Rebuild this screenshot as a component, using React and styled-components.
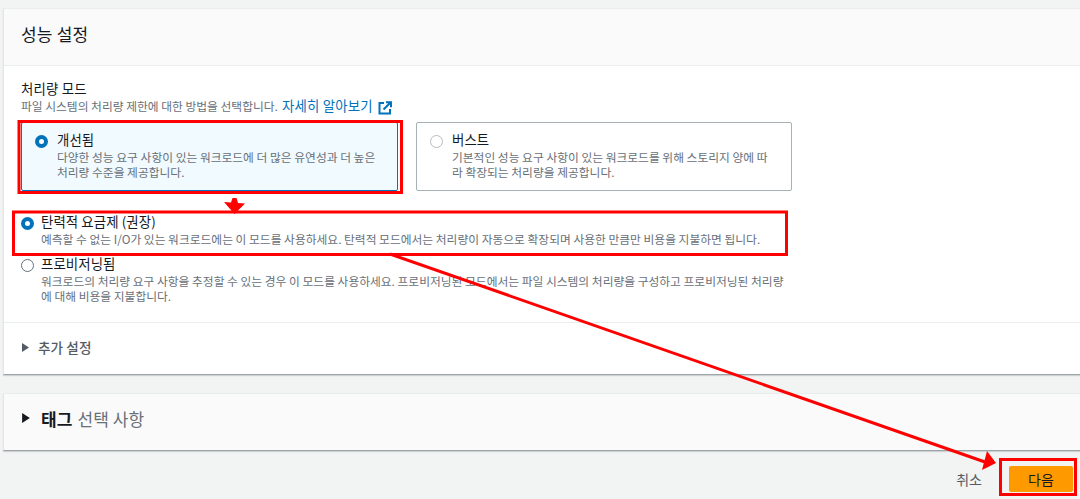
import React from "react";
import styled, { createGlobalStyle } from "styled-components";

const GlobalStyle = createGlobalStyle`
    html, body {
        margin: 0;
        padding: 0;
        background: #f2f3f3;
        font-family: "Noto Sans CJK KR", "Noto Sans", sans-serif;
        color: #16191f;
    }
    * { box-sizing: border-box; }
`;

const Page = styled.div`
    position: relative;
    width: 1080px;
    height: 499px;
    overflow: hidden;
    padding: 8px 0 0 3px;
`;

const Card = styled.section`
    background: ${(props) => (props.$muted ? "#fafafa" : "#fff")};
    border-left: 1px solid #e4e7e7;
    border-top: 1px solid #eaeded;
    border-bottom: 1px solid #9ba5a8;
    box-shadow: 0 1px 1px rgba(0, 28, 36, 0.15);
`;

const CardHeader = styled.header`
    height: 57px;
    padding: 0 0 6px 17px;
    display: flex;
    align-items: center;
    background: #fafafa;
    border-bottom: 1px solid #eaeded;
    font-size: 17px;
    letter-spacing: 0.2px;
    line-height: 20px;
`;

const CardBody = styled.div`
    padding: 13px 0 0 17px;
    height: 308px;
`;

const FieldLabel = styled.div`
    font-size: 13.4px;
    line-height: 18px;
    letter-spacing: 0.2px;
`;

const FieldHint = styled.div`
    display: flex;
    align-items: center;
    height: 17px;
    font-size: 11.75px;
    line-height: 17px;
    color: #687078;
`;

const LearnMore = styled.a`
    color: #0073bb;
    font-size: 13.4px;
    margin-left: 4px;
    letter-spacing: 0.2px;
`;

const ExternalIcon = styled.svg`
    margin: 4px 0 0 5px;
    width: 14px;
    height: 14px;
`;

const Tiles = styled.div`
    display: grid;
    grid-template-columns: 377px 376px;
    gap: 18px;
    margin-top: 8px;
`;

const Tile = styled.div`
    height: 69px;
    display: flex;
    gap: 9px;
    padding: 7px 19px 7px 13px;
    border: 1px solid ${(props) => (props.$selected ? "#0073bb" : "#a6b2b5")};
    border-radius: 2px;
    background: ${(props) => (props.$selected ? "#f1faff" : "#fff")};
`;

const Radio = styled.span`
    flex: none;
    width: 13px;
    height: 13px;
    margin-top: 5px;
    border-radius: 50%;
    background: #fff;
    border: ${(props) =>
        props.$checked
            ? "4px solid #0073bb"
            : `1px solid ${props.$faint ? "#b5bcbf" : "#687078"}`};
`;

const OptionTitle = styled.div`
    font-size: 13.4px;
    line-height: 19px;
    letter-spacing: 0.1px;
`;

const OptionText = styled.div`
    font-size: 11.75px;
    line-height: 15px;
    color: #687078;
`;

const Options = styled.div`
    display: flex;
    flex-direction: column;
    gap: 8px;
    margin-top: 21px;
`;

const Option = styled.div`
    display: flex;
    gap: 7px;
    width: 770px;
`;

const Divider = styled.hr`
    border: 0;
    border-top: 1px solid #eaeded;
    margin: 19px 0 0 -17px;
`;

const Expander = styled.div`
    display: flex;
    align-items: center;
    gap: ${(props) => (props.$large ? "11px" : "9px")};
    height: 48px;
    margin-left: ${(props) => (props.$large ? "0" : "1px")};
    font-size: ${(props) => (props.$large ? "17px" : "13.6px")};
    color: ${(props) => (props.$large ? "#16191f" : "#545b64")};
    font-weight: ${(props) => (props.$large ? 400 : 500)};
    letter-spacing: 0.1px;
`;

const Caret = styled.svg`
    flex: none;
    width: ${(props) => (props.$large ? "8px" : "7px")};
    height: ${(props) => (props.$large ? "10px" : "9px")};
    fill: ${(props) => (props.$large ? "#16191f" : "#545b64")};
`;

const TagCard = styled(Card)`
    margin-top: 18px;
    height: 58px;
    padding-left: 18px;
`;

const Strong = styled.strong`
    font-weight: 700;
`;

const Optional = styled.span`
    color: #687078;
    margin-left: 5px;
`;

const Footer = styled.footer`
    display: flex;
    justify-content: flex-end;
    align-items: center;
    gap: 27px;
    margin-top: 15px;
    padding-right: 7px;
`;

const LinkButton = styled.span`
    font-size: 14px;
    color: #545b64;
`;

const PrimaryButton = styled.span`
    width: 64px;
    height: 26px;
    display: flex;
    align-items: center;
    justify-content: center;
    background: #ff9900;
    border-radius: 2px;
    font-size: 14px;
`;

/* 스크린샷 위에 그려진 빨간 표시 */
const Overlay = styled.svg`
    position: absolute;
    left: 0;
    top: 0;
    width: 1080px;
    height: 499px;
    pointer-events: none;
`;

const App = () => (
    <Page>
        <GlobalStyle />
        <Card>
            <CardHeader>성능 설정</CardHeader>
            <CardBody>
                <FieldLabel>처리량 모드</FieldLabel>
                <FieldHint>
                    파일 시스템의 처리량 제한에 대한 방법을 선택합니다.
                    <LearnMore>자세히 알아보기</LearnMore>
                    <ExternalIcon viewBox="0 0 14 14" fill="none" stroke="#0073bb" strokeWidth="2">
                        <path d="M6 2H1.500v10.500H12V8" />
                        <path d="M5.500 8.500 12.500 1.500M8 1.200h5v5" />
                    </ExternalIcon>
                </FieldHint>
                <Tiles>
                    <Tile $selected>
                        <Radio $checked />
                        <div>
                            <OptionTitle>개선됨</OptionTitle>
                            <OptionText>
                                다양한 성능 요구 사항이 있는 워크로드에 더 많은 유연성과 더 높은
                                처리량 수준을 제공합니다.
                            </OptionText>
                        </div>
                    </Tile>
                    <Tile>
                        <Radio $faint />
                        <div>
                            <OptionTitle>버스트</OptionTitle>
                            <OptionText>
                                기본적인 성능 요구 사항이 있는 워크로드를 위해 스토리지 양에 따라
                                확장되는 처리량을 제공합니다.
                            </OptionText>
                        </div>
                    </Tile>
                </Tiles>
                <Options>
                    <Option>
                        <Radio $checked />
                        <div>
                            <OptionTitle>탄력적 요금제 (권장)</OptionTitle>
                            <OptionText>
                                예측할 수 없는 I/O가 있는 워크로드에는 이 모드를 사용하세요. 탄력적
                                모드에서는 처리량이 자동으로 확장되며 사용한 만큼만 비용을 지불하면
                                됩니다.
                            </OptionText>
                        </div>
                    </Option>
                    <Option>
                        <Radio />
                        <div>
                            <OptionTitle>프로비저닝됨</OptionTitle>
                            <OptionText>
                                워크로드의 처리량 요구 사항을 추정할 수 있는 경우 이 모드를
                                사용하세요. 프로비저닝된 모드에서는 파일 시스템의 처리량을 구성하고
                                프로비저닝된 처리량에 대해 비용을 지불합니다.
                            </OptionText>
                        </div>
                    </Option>
                </Options>
                <Divider />
                <Expander>
                    <Caret viewBox="0 0 7 9">
                        <path d="M0 0 7 4.500 0 9Z" />
                    </Caret>
                    추가 설정
                </Expander>
            </CardBody>
        </Card>
        <TagCard $muted>
            <Expander $large>
                <Caret $large viewBox="0 0 7 9">
                    <path d="M0 0 7 4.500 0 9Z" />
                </Caret>
                <span>
                    <Strong>태그</Strong>
                    <Optional>선택 사항</Optional>
                </span>
            </Expander>
        </TagCard>
        <Footer>
            <LinkButton>취소</LinkButton>
            <PrimaryButton>다음</PrimaryButton>
        </Footer>
        <Overlay viewBox="0 0 1080 499" fill="none" stroke="#f00" strokeWidth="3">
            <rect x="19" y="121.500" width="382.500" height="71" />
            <rect x="13.500" y="212" width="773" height="42.500" />
            <rect x="1000.500" y="459.500" width="75" height="35" />
            <path d="M232.500 198h4l1.500 5 7 0.500-10.500 10.500-10.500-12 7 0.500Z" fill="#f00" stroke="none" />
            <path d="M390 254 985 462" />
            <path d="M987 451 996 463 982 470Z" fill="#f00" stroke="none" />
        </Overlay>
    </Page>
);

export default App;
